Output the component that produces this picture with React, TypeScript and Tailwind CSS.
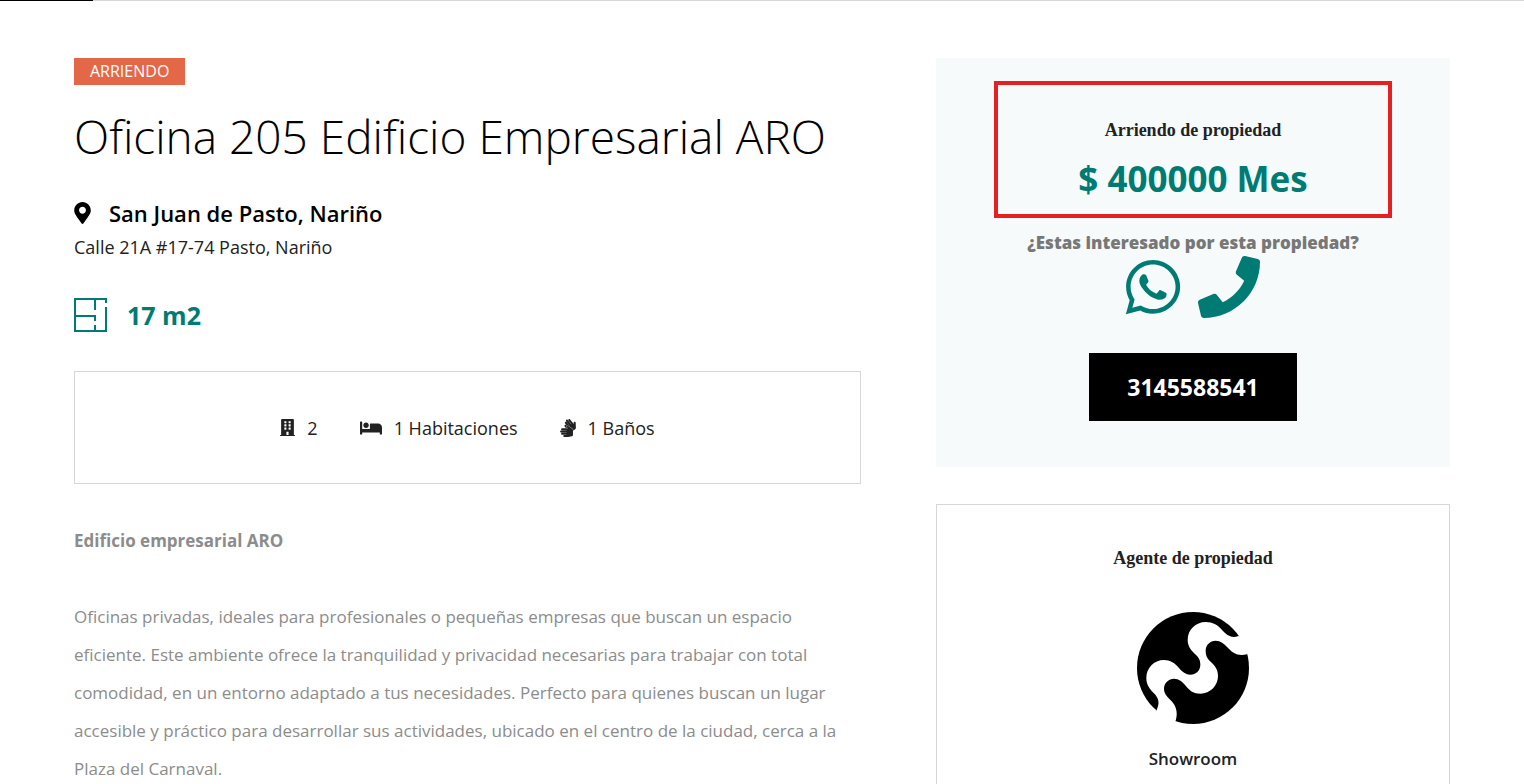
import type { ReactNode } from "react";
import { FaBed, FaBuilding, FaMapMarkerAlt, FaPhone, FaSignLanguage, FaWhatsapp } from "react-icons/fa";

function FloorPlanIcon() {
  return (
    <svg viewBox="0 0 33 34" className="h-[34px] w-[33px]" fill="none" stroke="currentColor" strokeWidth="2" aria-hidden="true">
      <path d="M32 5V1H1V33H32V9M21 1V12M1 18H21V23M21 27V33" />
    </svg>
  );
}

function AgentLogo() {
  return (
    <svg viewBox="51 36 336 336" className="size-28" role="img" aria-label="Showroom">
      <circle cx="219" cy="204" r="168" />
      <path
        fill="#fff"
        d="M355 108C333 116 319 105 304 88C293 75 278 66 257 66C227 66 203 90 203 119C203 137 212 150 224 161C236 172 241 179 241 194C241 211 228 224 211 224C197 224 187 216 177 204C165 189 151 180 132 180C102 180 79 204 79 234C79 254 88 266 101 279C116 294 120 307 110 330L130 400L167 362C173 342 171 323 157 306C144 291 132 283 132 266C132 249 146 236 162 236C177 236 187 245 197 257C209 272 221 281 241 281C271 281 294 257 294 228C294 208 285 197 272 185C261 174 257 166 257 152C257 135 270 122 287 122C302 122 312 131 322 142C337 159 354 170 381 163L410 130Z"
      />
    </svg>
  );
}

function Feature({ icon, children }: { icon: ReactNode; children: ReactNode }) {
  return (
    <li className="flex items-center gap-3">
      {icon}
      <span>{children}</span>
    </li>
  );
}

export default function App() {
  return (
    <div className="min-h-screen bg-white font-['Open_Sans',sans-serif] text-[#222]">
      <div className="h-px bg-[#d6d6d6]">
        <div className="h-px w-[93px] bg-black" />
      </div>
      <main className="grid grid-cols-[minmax(0,787fr)_minmax(0,514fr)] gap-[75px] px-[74px] pt-[57px]">
        <article>
          <div className="flex">
            <span className="bg-[#e46848] px-4 text-[16px] leading-[27px] text-white">ARRIENDO</span>
          </div>
          <h1 className="mt-[23px] text-[46px] leading-[56px] font-light text-black">Oficina 205 Edificio Empresarial ARO</h1>
          <div className="mt-[33px] flex items-center gap-[18px] text-black">
            <FaMapMarkerAlt className="h-[22px] w-[17px]" aria-hidden="true" />
            <h2 className="text-[22px] leading-8 font-semibold">San Juan de Pasto, Nariño</h2>
          </div>
          <p className="mt-[6px] text-[18px] leading-6">Calle 21A #17-74 Pasto, Nariño</p>
          <div className="mt-[39px] flex items-center gap-5 text-[#007b73]">
            <FloorPlanIcon />
            <span className="text-[25px] leading-[34px] font-bold">17 m2</span>
          </div>
          <ul className="mt-[39px] flex h-[113px] items-center justify-center gap-[42px] border border-[#d6d6d6] text-[18px] leading-6">
            <Feature icon={<FaBuilding className="h-[17px] w-[15px]" aria-hidden="true" />}>2</Feature>
            <Feature icon={<FaBed className="h-[18px] w-[22px]" aria-hidden="true" />}>1 Habitaciones</Feature>
            <Feature icon={<FaSignLanguage className="h-[18px] w-[16px]" aria-hidden="true" />}>1 Baños</Feature>
          </ul>
          <div className="mt-[38px] text-[17px] leading-[38px] text-[#8c8c8c]">
            <p className="font-bold">Edificio empresarial ARO</p>
            <p className="mt-[38px]">
              Oficinas privadas, ideales para profesionales o pequeñas empresas que buscan un espacio eficiente. Este ambiente
              ofrece la tranquilidad y privacidad necesarias para trabajar con total comodidad, en un entorno adaptado a tus
              necesidades. Perfecto para quienes buscan un lugar accesible y práctico para desarrollar sus actividades, ubicado
              en el centro de la ciudad, cerca a la Plaza del Carnaval.
            </p>
          </div>
        </article>
        <aside>
          <section className="flex flex-col items-center bg-[#f6fafb] pt-[23px] pb-[46px]">
            <div className="flex h-[137px] w-[398px] max-w-full flex-col items-center border-4 border-[#e42020] pt-[31px]">
              <h3 className="font-['Liberation_Serif',serif] text-[18px] leading-7 font-bold">Arriendo de propiedad</h3>
              <p className="mt-3 text-[35px] leading-[46px] font-bold text-[#007b73]">$ 400000 Mes</p>
            </div>
            <p className="mt-3 text-[17px] leading-[26px] font-extrabold text-[#777]">¿Estas interesado por esta propiedad?</p>
            <div className="flex items-center gap-[14px] pr-1 text-[#007b73]">
              <a href="https://wa.me/573145588541" aria-label="WhatsApp">
                <FaWhatsapp className="size-[62px]" />
              </a>
              <a href="tel:3145588541" aria-label="Llamar">
                <FaPhone className="size-[62px]" />
              </a>
            </div>
            <a href="tel:3145588541" className="mt-[35px] bg-black px-[38px] text-[23px] leading-[68px] font-bold text-white">
              3145588541
            </a>
          </section>
          <section className="mt-[37px] flex flex-col items-center border border-[#d6d6d6] pt-[39px] pb-10">
            <h3 className="font-['Liberation_Serif',serif] text-[18px] leading-7 font-bold">Agente de propiedad</h3>
            <div className="mt-10">
              <AgentLogo />
            </div>
            <p className="mt-[23px] text-[17px] leading-6 font-semibold">Showroom</p>
          </section>
        </aside>
      </main>
    </div>
  );
}
